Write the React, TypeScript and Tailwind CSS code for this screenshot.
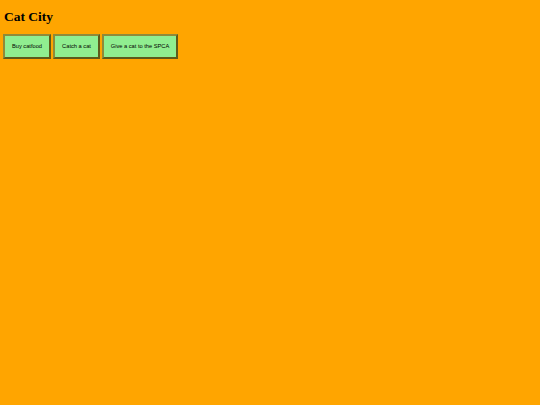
const actions = [
  { label: 'Buy catfood', width: 'w-[48px]' },
  { label: 'Catch a cat', width: 'w-[47px]' },
  { label: 'Give a cat to the SPCA', width: 'w-[76px]' },
];

export default function App() {
  return (
    <div className="min-h-screen bg-[#ffa500] px-[3px] pt-[7px]">
      <h1 className="text-[13.5px] font-bold text-black leading-[19px] pl-px" style={{ fontFamily: '"Liberation Serif", serif' }}>
        Cat City
      </h1>
      <div className="flex gap-[2px] mt-[8px]">
        {actions.map((a) => (
          <button
            key={a.label}
            className={`${a.width} h-[25px] bg-[#90ee90] text-[5.7px] text-black border-2 border-t-[#8f8a3a] border-l-[#8f8a3a] border-b-[#5f5a1a] border-r-[#5f5a1a]`}
            style={{ fontFamily: '"Liberation Sans", sans-serif' }}
          >
            {a.label}
          </button>
        ))}
      </div>
    </div>
  );
}
